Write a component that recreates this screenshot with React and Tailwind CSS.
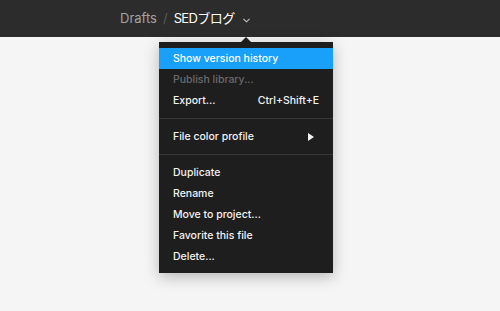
import { ChevronDown } from 'lucide-react'

const groups = [
  [
    { label: 'Show version history', active: true },
    { label: 'Publish library...', disabled: true },
    { label: 'Export...', shortcut: 'Ctrl+Shift+E' },
  ],
  [{ label: 'File color profile', submenu: true }],
  [
    { label: 'Duplicate' },
    { label: 'Rename' },
    { label: 'Move to project...' },
    { label: 'Favorite this file' },
    { label: 'Delete...' },
  ],
]

function MenuRow({ item }) {
  let tone = 'text-[#f2f2f2]'
  if (item.active) tone = 'bg-[#18a0fb] text-white'
  if (item.disabled) tone = 'text-[#6a6a6a]'

  return (
    <div className={`flex h-[21px] items-center justify-between px-[14px] text-[10.5px] font-medium ${tone}`}>
      <span>{item.label}</span>
      {item.shortcut && <span>{item.shortcut}</span>}
      {item.submenu && (
        <svg width="6" height="8" viewBox="0 0 6 8" className="mr-[5px]">
          <path d="M0 0 L6 4 L0 8 Z" fill="#f2f2f2" />
        </svg>
      )}
    </div>
  )
}

export default function App() {
  return (
    <div className="flex h-[311px] w-[500px] flex-col bg-[#f5f5f5] font-['Inter','Noto_Sans_CJK_JP',sans-serif]">
      {/* Top bar */}
      <div className="flex h-[37px] shrink-0 items-center bg-[#2c2c2c] pl-[120px] text-[13px]">
        <span className="text-[#a3a3a3]">Drafts</span>
        <span className="mx-[6px] text-[#5a5a5a]">/</span>
        <span className="tracking-[-0.6px] text-white">SEDブログ</span>
        <ChevronDown size={11} strokeWidth={2.5} className="ml-[6px] mt-[3px] text-[#bdbdbd]" />
      </div>

      {/* Dropdown menu */}
      <div className="relative ml-[159px] mt-[5px] w-[174px] bg-[#1e1e1e] py-[6px] shadow-[0_4px_14px_rgba(0,0,0,0.25)]">
        <div className="absolute -top-[5px] left-[82px] h-0 w-0 border-x-[5px] border-b-[5px] border-x-transparent border-b-[#1e1e1e]" />
        {groups.map((group, gi) => (
          <div key={gi}>
            {gi > 0 && <div className="my-[7px] h-px bg-[#363636]" />}
            {group.map((item) => (
              <MenuRow key={item.label} item={item} />
            ))}
          </div>
        ))}
      </div>
    </div>
  )
}
